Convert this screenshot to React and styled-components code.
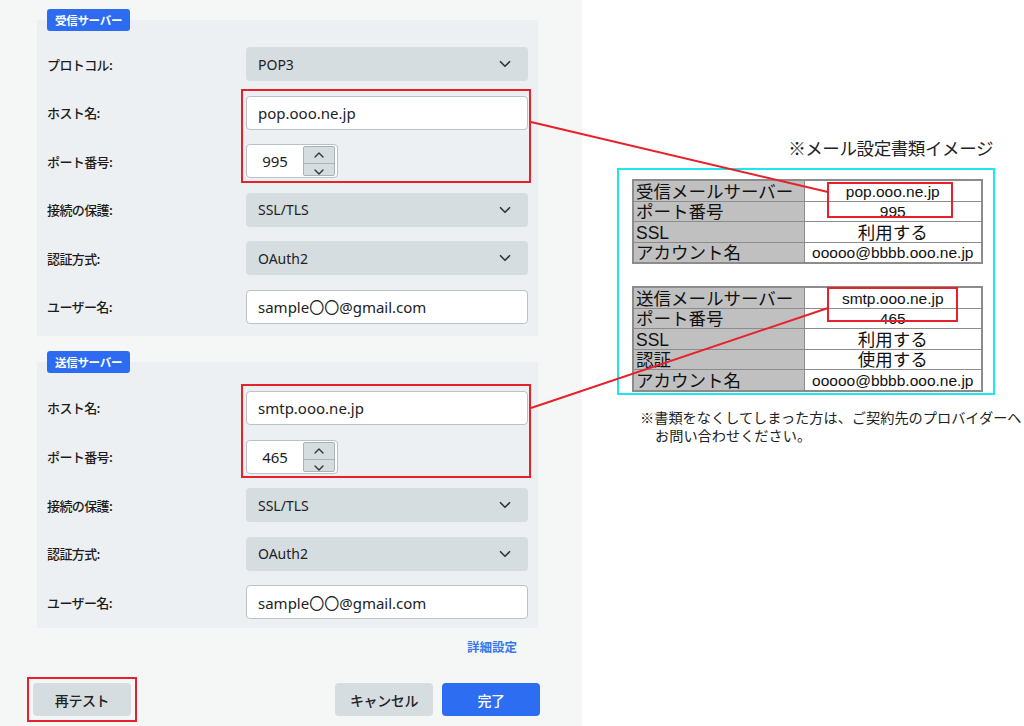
import React from 'react';
import styled, { createGlobalStyle } from 'styled-components';
import { ChevronDown, ChevronUp } from 'lucide-react';

const GlobalStyle = createGlobalStyle`
  body {
    margin: 0;
    background: #ffffff;
    font-family: "Noto Sans", "Noto Sans CJK JP", sans-serif;
  }
`;

const Page = styled.div`
  width: 1024px;
  height: 726px;
  position: relative;
  overflow: hidden;
  display: flex;
  background: #ffffff;
`;

const LeftPanel = styled.div`
  width: 582px;
  box-sizing: border-box;
  padding: 9px 0 0 37px;
  background: #f5f6f6;
  display: flex;
  flex-direction: column;
`;

const Section = styled.div`
  width: 501px;
  display: flex;
  flex-direction: column;
  margin-top: ${(p) => p.$top || 0}px;
`;

const Badge = styled.div`
  align-self: flex-start;
  margin-left: 10px;
  height: 22px;
  padding: 0 8px;
  border-radius: 3px;
  background: #2d6cf0;
  color: #ffffff;
  font-family: "Noto Sans CJK JP", sans-serif;
  font-size: 11.5px;
  font-weight: 700;
  line-height: 22px;
  letter-spacing: -0.3px;
  position: relative;
  z-index: 1;
`;

const Card = styled.div`
  margin-top: -11px;
  background: #edf0f2;
  padding: ${(p) => p.$pad};
  display: flex;
  flex-direction: column;
  gap: 14.6px;
`;

const Row = styled.div`
  display: grid;
  grid-template-columns: 199px 282px;
  align-items: center;
  height: 34px;
`;

const Label = styled.span`
  font-family: "Noto Sans CJK JP", sans-serif;
  font-size: 13px;
  font-weight: 500;
  color: #1c1c1c;
  letter-spacing: -0.6px;
`;

const Select = styled.div`
  height: 34px;
  box-sizing: border-box;
  border-radius: 4px;
  background: #d6dde0;
  display: flex;
  align-items: center;
  justify-content: space-between;
  padding: 0 14px 0 12px;
  font-size: 14px;
  color: #222;
`;

const TextInput = styled.div`
  height: 34px;
  box-sizing: border-box;
  border: 1px solid #b9c2c7;
  border-radius: 4px;
  background: #ffffff;
  display: flex;
  align-items: center;
  padding: 0 11px;
  font-size: 15px;
  color: #222;
`;

const Spinner = styled.div`
  width: 92px;
  height: 34px;
  box-sizing: border-box;
  border: 1px solid #b9c2c7;
  border-radius: 4px;
  background: #ffffff;
  display: flex;
  align-items: center;
  padding: 1px 2px 1px 0;
`;

const SpinValue = styled.span`
  flex: 1;
  text-align: center;
  font-size: 15px;
  color: #222;
`;

const SpinButtons = styled.div`
  width: 32px;
  height: 30px;
  box-sizing: border-box;
  border: 1px solid #a9b3b8;
  border-radius: 2px;
  background: #d6dde0;
  display: flex;
  flex-direction: column;
`;

const SpinHalf = styled.div`
  flex: 1;
  display: flex;
  align-items: center;
  justify-content: center;
  color: #333;
  border-top: ${(p) => (p.$lower ? '1px solid #a9b3b8' : 'none')};
`;

const LinkRow = styled.div`
  width: 501px;
  box-sizing: border-box;
  margin-top: 11px;
  padding-right: 21px;
  text-align: right;
  font-family: "Noto Sans CJK JP", sans-serif;
  font-size: 12.5px;
  font-weight: 700;
  color: #3a78e8;
  line-height: 16px;
`;

const ButtonRow = styled.div`
  margin: 28px 0 0 -4px;
  width: 507px;
  display: flex;
  gap: 9px;
`;

const Button = styled.div`
  width: 98px;
  height: 33px;
  border-radius: 4px;
  background: ${(p) => (p.$primary ? '#2c6df2' : '#d6dde0')};
  color: ${(p) => (p.$primary ? '#ffffff' : '#222')};
  display: flex;
  align-items: center;
  justify-content: center;
  font-family: "Noto Sans CJK JP", sans-serif;
  font-size: 14px;
  font-weight: 500;
  letter-spacing: -0.4px;
  margin-left: ${(p) => (p.$push ? 'auto' : '0')};
`;

const RightPanel = styled.div`
  flex: 1;
  padding: 139px 0 0 35px;
  display: flex;
  flex-direction: column;
`;

const Caption = styled.div`
  width: 378px;
  box-sizing: border-box;
  padding-right: 2px;
  text-align: right;
  font-family: "Liberation Sans", "Noto Sans CJK JP", sans-serif;
  font-size: 17.5px;
  line-height: 21px;
  color: #222;
  margin-bottom: 8px;
  letter-spacing: -0.4px;
`;

const DocBox = styled.div`
  width: 378px;
  height: 227px;
  box-sizing: border-box;
  border: 2px solid #1ee6ee;
  padding: 9px 10px 8px 13px;
  display: flex;
  flex-direction: column;
  gap: 22px;
`;

const DocTable = styled.table`
  width: 351px;
  table-layout: fixed;
  border-collapse: collapse;
  border: 2px solid #8c8c8c;
  font-family: "Liberation Sans", "Noto Sans CJK JP", sans-serif;
  color: #111;
`;

const KeyCol = styled.col`
  width: 171px;
`;

const KeyCell = styled.td`
  height: 19.5px;
  padding: 0 2px;
  background: #c0c0c0;
  border: 1px solid #8c8c8c;
  font-size: 17.5px;
  line-height: 18px;
  vertical-align: bottom;
  white-space: nowrap;
  overflow: hidden;
`;

const ValueCell = styled.td`
  height: 19.5px;
  padding: 0;
  background: #ffffff;
  border: 1px solid #8c8c8c;
  font-size: ${(p) => (p.$jp ? '17.5px' : '15.5px')};
  line-height: 18px;
  text-align: center;
  vertical-align: bottom;
  white-space: nowrap;
`;

const Note = styled.div`
  margin: 14px 0 0 23px;
  font-family: "Liberation Serif", "Noto Sans CJK JP", serif;
  font-size: 14.2px;
  line-height: 18px;
  color: #222;
  white-space: nowrap;
`;

const NoteLine = styled.div`
  padding-left: ${(p) => (p.$indent ? 15 : 0)}px;
`;

const Frame = styled.div`
  position: absolute;
  box-sizing: border-box;
  border: 2px solid #e8202a;
  pointer-events: none;
`;

const Lines = styled.svg`
  position: absolute;
  left: 0;
  top: 0;
  pointer-events: none;
`;

const SelectField = ({ value }) => (
  <Select>
    <span>{value}</span>
    <ChevronDown size={18} strokeWidth={2.2} color="#333" />
  </Select>
);

const PortField = ({ value }) => (
  <Spinner>
    <SpinValue>{value}</SpinValue>
    <SpinButtons>
      <SpinHalf>
        <ChevronUp size={16} strokeWidth={2} />
      </SpinHalf>
      <SpinHalf $lower>
        <ChevronDown size={16} strokeWidth={2} />
      </SpinHalf>
    </SpinButtons>
  </Spinner>
);

const Field = ({ label, children }) => (
  <Row>
    <Label>{label}</Label>
    {children}
  </Row>
);

const incoming = [
  ['受信メールサーバー', 'pop.ooo.ne.jp'],
  ['ポート番号', '995'],
  ['SSL', '利用する', true],
  ['アカウント名', 'ooooo@bbbb.ooo.ne.jp'],
];

const outgoing = [
  ['送信メールサーバー', 'smtp.ooo.ne.jp'],
  ['ポート番号', '465'],
  ['SSL', '利用する', true],
  ['認証', '使用する', true],
  ['アカウント名', 'ooooo@bbbb.ooo.ne.jp'],
];

const frames = [
  { left: 241, top: 89, width: 290, height: 94 },
  { left: 241, top: 384, width: 290, height: 94 },
  { left: 27, top: 677, width: 110, height: 45 },
  { left: 827, top: 182, width: 126, height: 36 },
  { left: 827, top: 287, width: 131, height: 35 },
];

const DocRows = ({ rows }) => (
  <DocTable>
    <colgroup>
      <KeyCol />
      <col />
    </colgroup>
    <tbody>
      {rows.map(([k, v, jp]) => (
        <tr key={k}>
          <KeyCell>{k}</KeyCell>
          <ValueCell $jp={jp}>{v}</ValueCell>
        </tr>
      ))}
    </tbody>
  </DocTable>
);

export default function App() {
  return (
    <>
      <GlobalStyle />
      <Page>
        <LeftPanel>
          <Section>
            <Badge>受信サーバー</Badge>
            <Card $pad="27px 10px 12px 10px">
              <Field label="プロトコル:">
                <SelectField value="POP3" />
              </Field>
              <Field label="ホスト名:">
                <TextInput>pop.ooo.ne.jp</TextInput>
              </Field>
              <Field label="ポート番号:">
                <PortField value="995" />
              </Field>
              <Field label="接続の保護:">
                <SelectField value="SSL/TLS" />
              </Field>
              <Field label="認証方式:">
                <SelectField value="OAuth2" />
              </Field>
              <Field label="ユーザー名:">
                <TextInput>sample〇〇@gmail.com</TextInput>
              </Field>
            </Card>
          </Section>

          <Section $top={15}>
            <Badge>送信サーバー</Badge>
            <Card $pad="29px 10px 9px 10px">
              <Field label="ホスト名:">
                <TextInput>smtp.ooo.ne.jp</TextInput>
              </Field>
              <Field label="ポート番号:">
                <PortField value="465" />
              </Field>
              <Field label="接続の保護:">
                <SelectField value="SSL/TLS" />
              </Field>
              <Field label="認証方式:">
                <SelectField value="OAuth2" />
              </Field>
              <Field label="ユーザー名:">
                <TextInput>sample〇〇@gmail.com</TextInput>
              </Field>
            </Card>
          </Section>

          <LinkRow>詳細設定</LinkRow>

          <ButtonRow>
            <Button>再テスト</Button>
            <Button $push>キャンセル</Button>
            <Button $primary>完了</Button>
          </ButtonRow>
        </LeftPanel>

        <RightPanel>
          <Caption>※メール設定書類イメージ</Caption>
          <DocBox>
            <DocRows rows={incoming} />
            <DocRows rows={outgoing} />
          </DocBox>
          <Note>
            <NoteLine>※書類をなくしてしまった方は、ご契約先のプロバイダーへ</NoteLine>
            <NoteLine $indent>お問い合わせください。</NoteLine>
          </Note>
        </RightPanel>

        {frames.map((f, i) => (
          <Frame key={i} style={f} />
        ))}
        <Lines width="1024" height="726">
          <line x1="531" y1="122" x2="828" y2="192" stroke="#e8202a" strokeWidth="2" />
          <line x1="531" y1="408" x2="828" y2="308" stroke="#e8202a" strokeWidth="2" />
        </Lines>
      </Page>
    </>
  );
}
